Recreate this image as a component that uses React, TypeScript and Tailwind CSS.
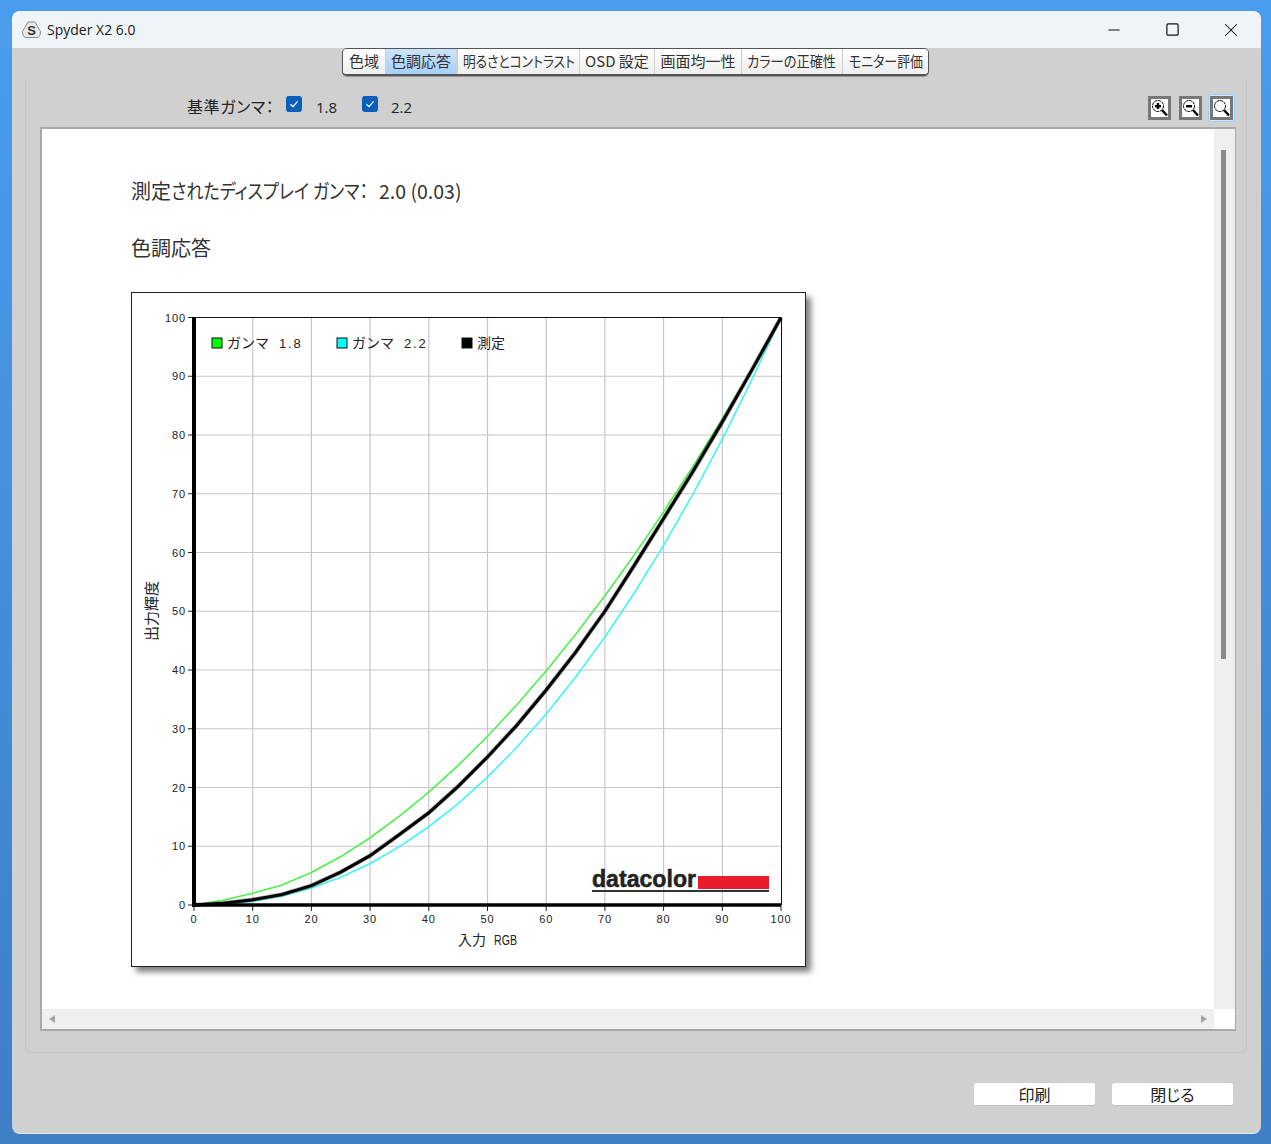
import React from 'react';
import { Minus, Square, X } from 'lucide-react';

const JP = "font-['Noto_Sans_CJK_JP','Noto_Sans',sans-serif] [font-feature-settings:'palt']";

const tabs = [
  { label: '色域', w: 'w-[42px]', cls: '' },
  { label: '色調応答', w: 'w-[72px]', cls: '' },
  { label: '明るさとコントラスト', w: 'w-[122px]', cls: 'scale-x-[0.85]' },
  { label: 'OSD 設定', w: 'w-[75px]', cls: '' },
  { label: '画面均一性', w: 'w-[87px]', cls: '' },
  { label: 'カラーの正確性', w: 'w-[101px]', cls: 'scale-x-[0.88]' },
  { label: 'モニター評価', w: 'w-[86px]', cls: 'scale-x-[0.86]' },
];

// chart helpers, coordinates are in screenshot pixels
const px = (v: number) => 194 + v * 5.87;
const py = (v: number) => 905 - v * 5.875;
const ticks = [0, 10, 20, 30, 40, 50, 60, 70, 80, 90, 100];

const gammaPoints = (g: number, low: Record<number, number> = {}) =>
  Array.from({ length: 21 }, (_, i) => i * 5)
    .map((v) => `${px(v)},${py(low[v] ?? 100 * Math.pow(v / 100, g))}`)
    .join(' ');

const measured: [number, number][] = [
  [0, 0], [5, 0.3], [10, 0.9], [15, 1.8], [20, 3.3], [25, 5.6], [30, 8.4], [35, 12], [40, 15.7],
  [45, 20.2], [50, 25.2], [55, 30.6], [60, 36.6], [65, 43], [70, 50], [75, 57.8], [80, 65.8],
  [85, 73.8], [90, 82.2], [95, 91], [100, 100],
];
const measuredPoints = measured.map(([x, y]) => `${px(x)},${py(y)}`).join(' ');

const tickFont = { fontSize: 11, fontFamily: 'Liberation Sans, sans-serif', letterSpacing: 0.9, fill: '#222' };
const legendNum = { fontSize: 13, fontFamily: 'Liberation Sans, sans-serif', letterSpacing: 1.8, fill: '#222' };
const jpFont = { fontSize: 14, fontFamily: 'Noto Sans CJK JP, sans-serif', fill: '#222' };

const Chart = () => (
  <div className="w-[675px] h-[675px] bg-white border border-[#222] shadow-[5px_5px_6px_rgba(0,0,0,0.5)]">
    <svg width="673" height="673" viewBox="132 293 673 673" className="block">
      {ticks.slice(1, 10).map((t) => (
        <g key={t} stroke="#c6c6c6" strokeWidth="1.2">
          <line x1={px(t)} x2={px(t)} y1={317} y2={905} />
          <line x1={194} x2={781} y1={py(t)} y2={py(t)} />
        </g>
      ))}
      <line x1={194} x2={781.5} y1={317.5} y2={317.5} stroke="#111" strokeWidth="1" />
      <line x1={781.5} x2={781.5} y1={317} y2={905} stroke="#111" strokeWidth="1" />

      {ticks.map((t) => (
        <g key={t}>
          <line x1={188} x2={194} y1={py(t)} y2={py(t)} stroke="#222" strokeWidth="1" />
          <line x1={px(t)} x2={px(t)} y1={905} y2={911} stroke="#222" strokeWidth="1" />
          <text x={186} y={py(t) + 4} textAnchor="end" {...tickFont}>{t}</text>
          <text x={px(t)} y={923} textAnchor="middle" {...tickFont}>{t}</text>
        </g>
      ))}

      <polyline points={gammaPoints(1.8, { 5: 0.8, 10: 2, 15: 3.4 })} fill="none" stroke="#4df04d" strokeWidth="1.6" />
      <polyline points={gammaPoints(2.2)} fill="none" stroke="#3ff5f5" strokeWidth="1.6" />
      <polyline points={measuredPoints} fill="none" stroke="#000" strokeOpacity="0.3" strokeWidth="4.6" />
      <polyline points={measuredPoints} fill="none" stroke="#000" strokeWidth="3" />

      <line x1={194} x2={194} y1={317} y2={907} stroke="#000" strokeWidth="4" />
      <line x1={192} x2={781} y1={905} y2={905} stroke="#000" strokeWidth="3.5" />

      <rect x={212} y={338} width={10} height={10} fill="#00ff00" stroke="#111" />
      <text x={227} y={348} {...jpFont}>ガンマ</text>
      <text x={279} y={348} {...legendNum}>1.8</text>
      <rect x={337} y={338} width={10} height={10} fill="#00ffff" stroke="#111" />
      <text x={352} y={348} {...jpFont}>ガンマ</text>
      <text x={404} y={348} {...legendNum}>2.2</text>
      <rect x={462} y={338} width={10} height={10} fill="#000" stroke="#111" />
      <text x={477} y={348} {...jpFont}>測定</text>

      <text x={458} y={945} {...jpFont}>入力</text>
      <text x={494} y={945} fontSize={15} textLength={23} lengthAdjust="spacingAndGlyphs" fontFamily="Liberation Sans, sans-serif" fill="#222">RGB</text>
      <text transform="translate(157 641) rotate(-90)" {...jpFont} fontSize={15}>出力輝度</text>

      <text x={592} y={887} fontSize="23" fontWeight="700" textLength={104} lengthAdjust="spacingAndGlyphs" fontFamily="Liberation Sans, sans-serif" fill="#222" stroke="#222" strokeWidth="0.5">datacolor</text>
      <rect x={698} y={876} width={71} height={13} fill="#ea1c2c" />
      <rect x={592} y={890} width={177} height={2} fill="#333" />
    </svg>
  </div>
);

const ZoomIcon = ({ kind, active }: { kind: 'plus' | 'minus' | 'none'; active?: boolean }) => (
  <div className={active ? 'rounded-[2px] border border-[#9fd0fb] bg-[#cfe6fb] p-px' : 'p-0.5'}>
    <div className="w-[23px] h-[24px] border-[3px] border-[#777] bg-white">
      <svg width="17" height="18" viewBox="0 0 17 18" className="block">
        <circle cx="7" cy="7" r="5.5" fill="none" stroke="#000" strokeWidth="1" strokeDasharray="3 0.6" />
        <line x1="11" y1="11" x2="16" y2="16.5" stroke="#000" strokeWidth="2.4" />
        {kind !== 'none' && <rect x="4" y="6" width="6" height="2.4" fill="#000" />}
        {kind === 'plus' && <rect x="5.8" y="4" width="2.4" height="6" fill="#000" />}
      </svg>
    </div>
  </div>
);

const Check = ({ label, labelCls }: { label: string; labelCls: string }) => (
  <div className="flex items-center">
    <div className="w-4 h-4 rounded-[3px] bg-[#0a5fb8] flex items-center justify-center -mt-1">
      <svg width="10" height="10" viewBox="0 0 10 10">
        <path d="M1.5 5.2 L4 7.6 L8.6 2.4" fill="none" stroke="#fff" strokeWidth="1.2" />
      </svg>
    </div>
    <span className={`mt-[2px] text-[15px] text-[#222] font-['Open_Sans',sans-serif] ${labelCls}`}>{label}</span>
  </div>
);

export default function App() {
  return (
    <div className="w-[1271px] h-[1144px] pt-[11px] pl-[12px] bg-gradient-to-b from-[#4a9cee] to-[#3e7fc6] overflow-hidden">
      <div className="w-[1249px] h-[1123px] rounded-lg overflow-hidden bg-[#d0d0d0] flex flex-col border-b border-[#e8e8e8]">
        {/* title bar */}
        <div className="h-[37px] shrink-0 bg-[#eff4f9] flex items-center pl-[9px]">
          <svg width="21" height="20" viewBox="0 0 21 20" className="mr-[5px]">
            <path d="M7 2 H14 L19.5 11.5 Q20 15 17 17.5 H4 Q1 15 1.5 11.5 Z" fill="#e8e8e8" stroke="#8a8a8a" strokeWidth="1" strokeLinejoin="round" />
            <text x="10.5" y="14.5" textAnchor="middle" fontSize="13" fontWeight="700" fontFamily="Liberation Sans, sans-serif" fill="#333">S</text>
          </svg>
          <span className="text-[14px] text-[#1a1a1a] font-['Open_Sans',sans-serif]">Spyder X2 6.0</span>
          <div className="ml-auto flex items-center text-[#111]">
            <div className="w-[59px] flex justify-center"><Minus size={18} strokeWidth={1.4} /></div>
            <div className="w-[59px] flex justify-center"><Square size={15} strokeWidth={1.9} /></div>
            <div className="w-[59px] flex justify-center pr-px"><X size={22} strokeWidth={1.1} /></div>
          </div>
        </div>

        {/* tabs */}
        <div className="h-[32px] shrink-0 pl-[330px]">
          <div className={`inline-flex h-[28px] rounded-[5px] border border-[#555] border-b-2 overflow-hidden bg-white shadow-[0_1px_1px_rgba(0,0,0,0.3)] ${JP}`}>
            {tabs.map((t, i) => (
              <div
                key={t.label}
                className={`${t.w} ${i === 0 ? '' : 'border-l border-[#cfcfcf]'} ${
                  i === 1
                    ? 'bg-gradient-to-b from-[#cbe3fb] to-[#a3d0fb] border-r border-[#8fc1f3]'
                    : 'bg-gradient-to-b from-white to-[#eeeeee]'
                } flex items-center justify-center whitespace-nowrap text-[15px] text-[#333]`}
              >
                <span className={`inline-block shrink-0 ${t.cls}`}>{t.label}</span>
              </div>
            ))}
          </div>
        </div>

        {/* panel */}
        <div className="h-[973px] mx-[13px] w-[1222px] shrink-0 border-l border-r border-b border-[#c6c6c6] rounded-b-md pl-[14px] pr-[10px] flex flex-col">
          <div className="h-[47px] shrink-0 flex items-start pt-[14px]">
            <span className={`ml-[147px] text-[16px] leading-[24px] w-[99px] tracking-[0.6px] text-[#222] ${JP}`}>基準ガンマ：</span>
            <Check label="1.8" labelCls="ml-[14px] w-[46px]" />
            <Check label="2.2" labelCls="ml-[13px]" />
            <div className="ml-auto flex items-center gap-[4px] mr-px">
              <ZoomIcon kind="plus" />
              <ZoomIcon kind="minus" />
              <ZoomIcon kind="none" active />
            </div>
          </div>

          <div className="h-[904px] shrink-0 border-t-2 border-l-2 border-r border-b-2 border-[#a8a8a8] bg-white flex flex-col">
            <div className="flex-1 flex min-h-0">
              <div className="flex-1 pl-[89px] pt-[48px] overflow-hidden">
                <div className={`flex text-[20px] leading-[28px] text-[#333] whitespace-nowrap ${JP}`}>
                  <span>測定</span>
                  <span className="w-[195px] origin-left scale-x-[0.855]">されたディスプレイ ガンマ：</span>
                  <span className="ml-[13px] text-[19.5px]">2.0 (0.03)</span>
                </div>
                <div className={`mt-[29px] text-[20px] leading-[28px] text-[#333] ${JP}`}>色調応答</div>
                <div className="mt-[30px]"><Chart /></div>
              </div>
              <div className="w-[21px] shrink-0 bg-[#efefef] pt-[21px] pl-[7px]">
                <div className="w-[5px] h-[509px] bg-[#8a8a8a]" />
              </div>
            </div>
            <div className="h-[20px] shrink-0 flex">
              <div className="flex-1 bg-[#efefef] flex items-center justify-between px-[7px]">
                <div className="w-0 h-0 border-y-[4px] border-y-transparent border-r-[6px] border-r-[#a5a5a5]" />
                <div className="w-0 h-0 border-y-[4px] border-y-transparent border-l-[6px] border-l-[#a5a5a5]" />
              </div>
              <div className="w-[21px] bg-white" />
            </div>
          </div>
        </div>

        {/* footer buttons */}
        <div className={`flex justify-end gap-[17px] pt-[30px] pr-[28px] ${JP}`}>
          <button className="w-[121px] h-[23px] rounded-[3px] bg-white border-b border-[#c0c0c0] text-[16px] leading-[22px] text-[#222]">印刷</button>
          <button className="w-[121px] h-[23px] rounded-[3px] bg-white border-b border-[#c0c0c0] text-[16px] leading-[22px] text-[#222]">閉じる</button>
        </div>
      </div>
    </div>
  );
}
